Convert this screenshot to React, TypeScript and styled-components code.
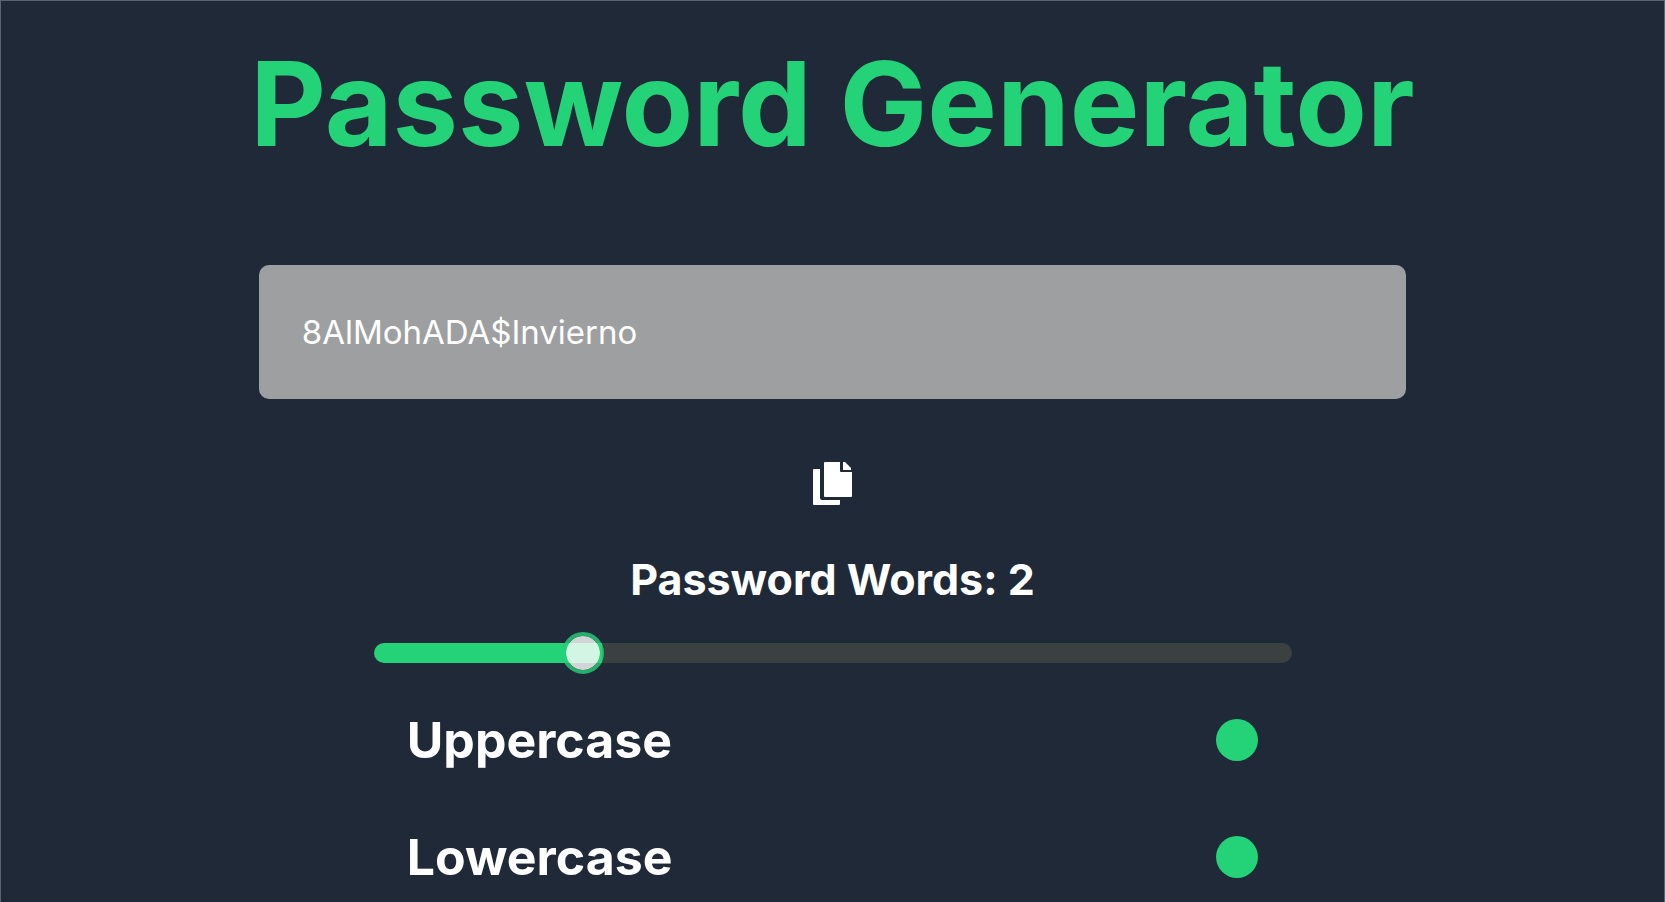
import React, { useState } from "react";
import styled, { createGlobalStyle } from "styled-components";

const GlobalStyle = createGlobalStyle`
  *, *::before, *::after { box-sizing: border-box; }
  body {
    margin: 0;
    background: #202937;
    color: #ffffff;
    font-family: Inter, "Liberation Sans", sans-serif;
  }
`;

const Page = styled.main`
  height: 100vh;
  overflow: hidden;
  border: 1px solid #5a636e;
  border-bottom: 0;
  display: flex;
  flex-direction: column;
  align-items: center;
`;

const Title = styled.h1`
  margin: 33px 0 0;
  font-size: 117px;
  line-height: 140px;
  font-weight: 700;
  color: #24d278;
  white-space: nowrap;
`;

const PasswordField = styled.input`
  width: 69%;
  height: 134px;
  margin-top: 91px;
  flex-shrink: 0;
  padding: 0 43px;
  border: 0;
  border-radius: 10px;
  background: #9e9fa0;
  color: #ffffff;
  font-family: inherit;
  font-size: 33px;
  line-height: 40px;
`;

const CopyButton = styled.button`
  margin-top: 63px;
  padding: 0;
  border: 0;
  background: none;
  color: #ffffff;
  line-height: 0;
  cursor: pointer;
`;

const SliderLabel = styled.label`
  margin-top: 46px;
  font-size: 43px;
  line-height: 56px;
  font-weight: 700;
`;

const Slider = styled.input<{ $ratio: number }>`
  appearance: none;
  width: 918px;
  max-width: 92%;
  height: 42px;
  margin: 25px 0 0;
  flex-shrink: 0;
  background: transparent;

  &::-webkit-slider-runnable-track {
    --end: calc(40px + (100% - 42px) * ${(p) => p.$ratio});
    height: 20px;
    border-radius: 10px;
    background: linear-gradient(to right, #24d278 var(--end), #3a4140 var(--end));
  }
  &::-webkit-slider-thumb {
    appearance: none;
    width: 42px;
    height: 42px;
    margin-top: -11px;
    border: 4px solid #24d278;
    border-radius: 50%;
    background: #ffffff;
    background-clip: padding-box;
    opacity: 0.8;
  }
`;

const Options = styled.div`
  width: 51.2%;
  margin-top: 36px;
  display: flex;
  flex-direction: column;
  gap: 57px;
`;

const Option = styled.label`
  display: flex;
  align-items: center;
  justify-content: space-between;
  font-size: 50px;
  line-height: 60px;
  font-weight: 700;
`;

const Toggle = styled.input`
  appearance: none;
  width: 42px;
  height: 42px;
  margin: 0;
  border-radius: 50%;
  background: #3a4140;
  &:checked { background: #24d278; }
`;

const CopyIcon = () => (
  <svg width="41" height="43" viewBox="0 0 41 43" fill="currentColor" aria-hidden="true">
    <path d="M13 0h15v9a1 1 0 0 0 1 1h11v24a1 1 0 0 1-1 1H13a1 1 0 0 1-1-1V1a1 1 0 0 1 1-1Z" />
    <path d="M31 0h2l6 6v2h-8Z" />
    <path d="M2 7h6v29a2 2 0 0 0 2 2h18v4a1 1 0 0 1-1 1H2a1 1 0 0 1-1-1V8a1 1 0 0 1 1-1Z" />
  </svg>
);

const MIN_WORDS = 1;
const MAX_WORDS = 5.65;

export default function App() {
  const [words, setWords] = useState(2);
  const [password, setPassword] = useState("8AlMohADA$Invierno");
  return (
    <>
      <GlobalStyle />
      <Page>
        <Title>Password Generator</Title>
        <PasswordField
          aria-label="Password"
          value={password}
          onChange={(e) => setPassword(e.target.value)}
        />
        <CopyButton
          type="button"
          aria-label="Copy password"
          onClick={() => navigator.clipboard?.writeText(password)}
        >
          <CopyIcon />
        </CopyButton>
        <SliderLabel htmlFor="words">Password Words: {words}</SliderLabel>
        <Slider
          id="words"
          type="range"
          min={MIN_WORDS}
          max={MAX_WORDS}
          step={1}
          value={words}
          $ratio={(words - MIN_WORDS) / (MAX_WORDS - MIN_WORDS)}
          onChange={(e) => setWords(Number(e.target.value))}
        />
        <Options>
          {["Uppercase", "Lowercase"].map((name) => (
            <Option key={name}>
              {name}
              <Toggle type="checkbox" defaultChecked />
            </Option>
          ))}
        </Options>
      </Page>
    </>
  );
}
